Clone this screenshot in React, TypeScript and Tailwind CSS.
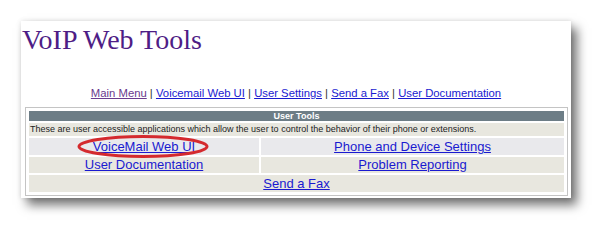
import React from 'react';

const linkCls = 'text-[#1a1ad0] underline';

export default function App() {
  return (
    <div className="w-[613px] h-[241px] bg-white pl-[21px] pt-[21px] font-['Liberation_Sans',Arial,sans-serif]">
      <div className="w-[550px] h-[177px] bg-white flex flex-col shadow-[6px_7px_10px_rgba(0,0,0,0.55),0_0_5px_rgba(0,0,0,0.12)]">
        {/* Page title */}
        <h1 className="pl-[1px] pt-[3px] text-[28px] leading-[32px] text-[#4e1d86] font-['Liberation_Serif','Times_New_Roman',serif]">
          VoIP Web Tools
        </h1>

        {/* Top nav */}
        <div className="mt-[30px] text-center text-[11.3px] leading-[14px] text-[#333]">
          <a className="text-[#6a3a8e] underline">Main Menu</a> |{' '}
          <a className={linkCls}>Voicemail Web UI</a> |{' '}
          <a className={linkCls}>User Settings</a> |{' '}
          <a className={linkCls}>Send a Fax</a> |{' '}
          <a className={linkCls}>User Documentation</a>
        </div>

        {/* Tools table */}
        <div className="mt-[7px] ml-[4px] w-[543px] border border-[#c4c4c4] p-[1px]">
          <table className="w-full border-separate border-spacing-[2px]">
            <tbody>
              <tr>
                <td colSpan={2} className="bg-[#6d7d86] text-white font-bold text-[9px] leading-[10px] text-center">
                  User Tools
                </td>
              </tr>
              <tr>
                <td colSpan={2} className="bg-[#e8e7df] text-[#222] text-[9px] leading-[13px] pl-[1px]">
                  These are user accessible applications which allow the user to control the behavior of their phone or extensions.
                </td>
              </tr>
              <tr>
                <td className="w-[230px] bg-[#e9e9ec] text-center text-[13px] leading-[17px]">
                  <span className="relative inline-block">
                    <a className={linkCls}>VoiceMail Web UI</a>
                    <svg className="absolute left-[-16px] top-[-3px] overflow-visible" width="132" height="23" viewBox="0 0 132 23">
                      <ellipse cx="66" cy="11.5" rx="64" ry="10" fill="none" stroke="#d42a2e" strokeWidth="3" />
                    </svg>
                  </span>
                </td>
                <td className="bg-[#e9e9ec] text-center text-[13px] leading-[17px]">
                  <a className={linkCls}>Phone and Device Settings</a>
                </td>
              </tr>
              <tr>
                <td className="bg-[#e8e7df] text-center text-[13px] leading-[16px]">
                  <a className={linkCls}>User Documentation</a>
                </td>
                <td className="bg-[#e8e7df] text-center text-[13px] leading-[16px]">
                  <a className={linkCls}>Problem Reporting</a>
                </td>
              </tr>
              <tr>
                <td colSpan={2} className="bg-[#e8e7df] text-center text-[13px] leading-[17px]">
                  <a className={linkCls}>Send a Fax</a>
                </td>
              </tr>
            </tbody>
          </table>
        </div>
      </div>
    </div>
  );
}
